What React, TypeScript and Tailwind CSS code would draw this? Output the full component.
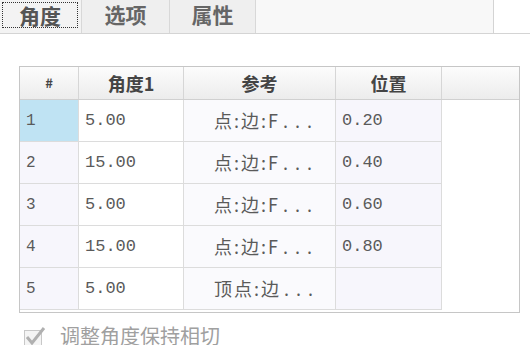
import React from "react";

const cjk = { fontFamily: '"Noto Sans CJK SC", "Noto Sans", sans-serif' };
const mono = { fontFamily: '"Liberation Mono", "Noto Sans CJK SC", monospace' };

const rows = [
  ["1", "5.00", "点:边:F", "0.20"],
  ["2", "15.00", "点:边:F", "0.40"],
  ["3", "5.00", "点:边:F", "0.60"],
  ["4", "15.00", "点:边:F", "0.80"],
  ["5", "5.00", "顶点:边", ""],
];

export default function App() {
  return (
    <div className="w-[530px] h-[345px] bg-white overflow-hidden relative" style={cjk}>
      {/* tab strip */}
      <div className="flex h-[34px] bg-[#f8f8f8] border-b border-[#d4d4d4]">
        <div className="w-[82px] bg-[#f3f3f3] border-r border-[#d8d8d8] pt-[2px] pl-[2px]">
          <div className="w-[76px] h-[26px] border border-dotted border-[#333] flex items-center justify-center text-[21px] font-bold text-[#555] leading-[24px]">
            角度
          </div>
        </div>
        <div className="w-[88px] h-[33px] bg-[#efefef] border-r border-[#d8d8d8] flex items-center pb-[5px] justify-center text-[21px] font-bold text-[#666] leading-[26px]">
          选项
        </div>
        <div className="w-[86px] h-[33px] bg-[#efefef] border-r border-[#d8d8d8] flex items-center pb-[5px] justify-center text-[21px] font-bold text-[#666] leading-[26px]">
          属性
        </div>
        <div className="w-[238px] border-r border-[#d4d4d4]" />
        <div className="flex-1 bg-white" />
      </div>

      {/* table box */}
      <div className="ml-[19px] mt-[32px] w-[501px] h-[247px] border border-[#c6c6c6] bg-white">
        <div className="flex h-[33px] bg-gradient-to-b from-[#fcfcfc] to-[#ececec] border-b border-[#d0d0d0] text-[#444] font-bold">
          <div className="w-[59px] border-r border-[#d6d6d6] flex items-center justify-center text-[13px]">#</div>
          <div className="w-[105px] border-r border-[#d6d6d6] flex items-center justify-center text-[18px]">角度1</div>
          <div className="w-[152px] border-r border-[#d6d6d6] flex items-center justify-center text-[18px]">参考</div>
          <div className="w-[106px] border-r border-[#d6d6d6] flex items-center justify-center text-[18px]">位置</div>
          <div className="flex-1" />
        </div>
        {rows.map((r, i) => (
          <div key={i} className="flex h-[42px] w-[422px] border-b border-[#dcdcdc] text-[#5a5a5a]">
            <div
              className={`w-[59px] border-r border-[#dcdcdc] flex items-center pl-[6px] text-[16px] ${i === 0 ? "bg-[#bfe3f3]" : "bg-[#f7f6fc]"}`}
              style={mono}
            >
              {r[0]}
            </div>
            <div className="w-[105px] border-r border-[#dcdcdc] bg-white flex items-center pl-[6px] text-[17px]" style={mono}>
              {r[1]}
            </div>
            <div className="w-[152px] border-r border-[#dcdcdc] bg-[#fafafd] flex items-center pl-[30px] text-[18px] whitespace-nowrap">
              <span className="tracking-[2px]">{r[2]}</span>
              <span className="tracking-[7px] ml-[3px]">...</span>
            </div>
            <div className="w-[106px] border-r border-[#dcdcdc] bg-[#f7f6fc] flex items-center pl-[6px] text-[17px]" style={mono}>
              {r[3]}
            </div>
          </div>
        ))}
      </div>

      {/* checkbox */}
      <div className="flex items-start ml-[24px] mt-[13px] gap-[12px] text-[#a0a0a0]">
        <svg width="24" height="20" viewBox="0 0 24 20" className="mt-[1px]">
          <rect x="0.5" y="3.5" width="17" height="16" fill="#f4f4f4" stroke="#c8c8c8" />
          <path d="M3 10 L8 16 L20 1" fill="none" stroke="#b0b0b0" strokeWidth="3" />
        </svg>
        <span className="text-[20px] leading-none">调整角度保持相切</span>
      </div>
    </div>
  );
}
